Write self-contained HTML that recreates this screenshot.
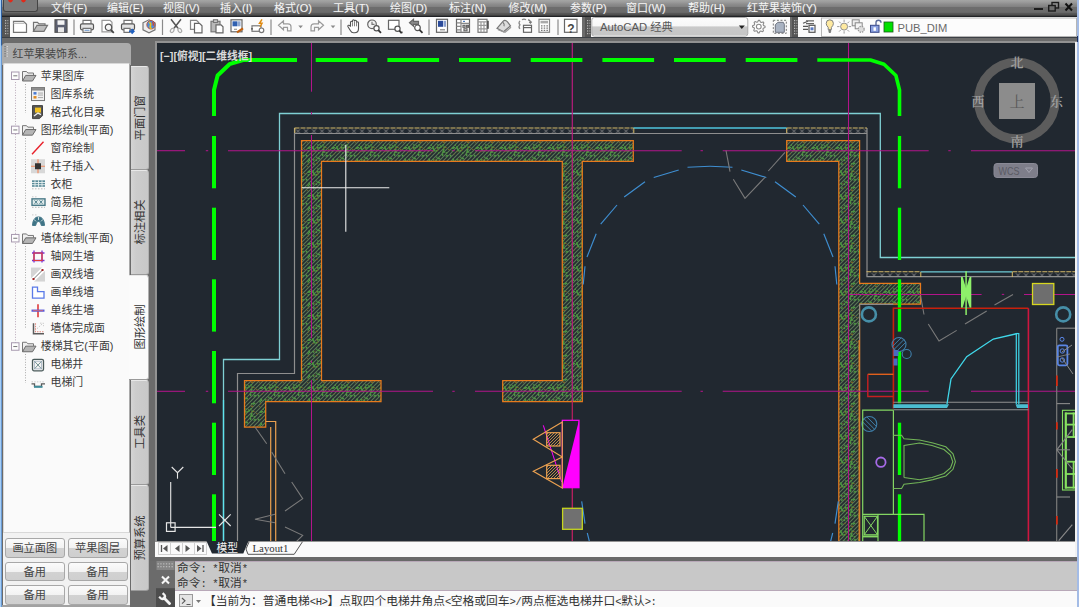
<!DOCTYPE html>
<html lang="zh">
<head>
<meta charset="utf-8">
<title>AutoCAD</title>
<style>
html,body{margin:0;padding:0;}
body{width:1079px;height:607px;overflow:hidden;position:relative;background:#6b6b6b;font-family:"Liberation Sans","Noto Sans CJK SC",sans-serif;font-size:12px;}
.abs{position:absolute;}
#menubar{left:0;top:0;width:1079px;height:17px;background:linear-gradient(#a5a6a5 0,#9c9c9c 2px,#8e8e8e 4px,#828282 6.5px,#6d6d6d 7.5px,#6b6b6b 12.3px,#595959 13.2px,#4b4b4b 15.3px,#222 16px,#20242a 17px);}
#menubar span{position:absolute;top:-0.5px;color:#f4f4f4;font-size:11px;line-height:16px;white-space:nowrap;text-shadow:0 0 1px #999;}
#logo{left:3px;top:0;width:35px;height:12px;background:#7a7a7a;border:1px solid #444;border-top:none;border-radius:0 0 3px 3px;box-sizing:border-box;}
.tb{top:17px;height:20px;background:#fafafa;}
.grip{top:17px;height:20px;width:6px;background:#555;}
#drawwrap{left:154.5px;top:41px;width:922px;height:501px;background:#929292;}
#draw{left:157px;top:43px;width:918px;height:498px;background:#212830;overflow:hidden;}
#tabs{left:155px;top:541.5px;width:921.5px;height:15px;background:#fafafa;}
#cmdhist{left:175px;top:560.6px;width:902px;height:30.6px;background:#c8c8c8;border-top:1px solid #b8a8b8;border-bottom:1px solid #b8a8b8;box-sizing:border-box;}
#cmdline{left:175px;top:591px;width:902px;height:16px;background:#fafafa;}
#cmdleft{left:155px;top:560px;width:20px;height:47px;background:#6b6b6b;}
.cmdtxt{font-family:"Liberation Mono","Noto Sans CJK SC",monospace;font-size:11.75px;color:#333;white-space:nowrap;line-height:13px;}
#panel{left:3px;top:43px;width:128px;height:564px;}
</style>
</head>
<body>
<!-- window edges -->
<div class="abs" style="left:0;top:0;width:1.3px;height:607px;background:#a6cef6;z-index:50;"></div>
<div class="abs" style="left:1.3px;top:0;width:1px;height:607px;background:linear-gradient(#2f5f9f 0,#2f5f9f 45px,#6a9ad2 46px,#6a9ad2 100%);z-index:50;"></div>
<div class="abs" style="left:1077.2px;top:0;width:2px;height:607px;background:#a4bce6;z-index:50;"></div>
<div class="abs" style="left:1076.6px;top:36px;width:1.6px;height:6px;background:#1c3264;z-index:51;"></div>
<div class="abs" style="left:1074.7px;top:42px;width:2.5px;height:515px;background:#f2f2f2;z-index:40;"></div>

<div id="menubar" class="abs">
<div id="logo" class="abs"></div>
<svg class="abs" style="left:0;top:0" width="1079" height="16" viewBox="0 0 1079 16">
<path d="M8,0 h5 q-0.5,2.2 -2.5,2.4 q-2,-0.3 -2.5,-2.4 z M21,0 h5 q-0.6,2.2 -2.6,2.4 q-1.9,-0.3 -2.4,-2.4 z" fill="#e02a1a"/>
<path d="M1034,9 h9" stroke="#1c1c1c" stroke-width="2"/>
<rect x="1052" y="2.5" width="6.5" height="5.5" fill="none" stroke="#1c1c1c" stroke-width="1.4"/>
<rect x="1048.7" y="5.5" width="6.5" height="5.5" fill="#6e6e6e" stroke="#1c1c1c" stroke-width="1.4"/>
<path d="M1065.5,3.5 l6.5,7 M1072,3.5 l-6.5,7" stroke="#111" stroke-width="2"/>
</svg>
<span style="left:51px">文件(F)</span>
<span style="left:107px">编辑(E)</span>
<span style="left:163px">视图(V)</span>
<span style="left:220px">插入(I)</span>
<span style="left:274px">格式(O)</span>
<span style="left:333px">工具(T)</span>
<span style="left:390px">绘图(D)</span>
<span style="left:449px">标注(N)</span>
<span style="left:508.5px">修改(M)</span>
<span style="left:570px">参数(P)</span>
<span style="left:626px">窗口(W)</span>
<span style="left:688px">帮助(H)</span>
<span style="left:747px">红苹果装饰(Y)</span>
</div>

<!-- toolbars -->
<div class="abs" style="left:2.3px;top:36.8px;width:1075px;height:1.4px;background:#3c4045;"></div>
<div class="abs grip" style="left:2.3px;width:8px"></div>
<div class="abs tb" style="left:10px;width:572px"></div>
<div class="abs grip" style="left:585px"></div>
<div class="abs tb" style="left:591px;width:199px"></div>
<div class="abs grip" style="left:792px"></div>
<div class="abs tb" style="left:798px;width:279px"></div>

<svg class="abs" style="left:0;top:16px" width="1079" height="22" viewBox="0 16 1079 22" font-family="Liberation Sans, Noto Sans CJK SC, sans-serif">
<rect x="5" y="20.0" width="1.2" height="1.2" fill="#bbb"/><rect x="7.2" y="20.0" width="1.2" height="1.2" fill="#999"/>
<rect x="5" y="22.6" width="1.2" height="1.2" fill="#bbb"/><rect x="7.2" y="22.6" width="1.2" height="1.2" fill="#999"/>
<rect x="5" y="25.2" width="1.2" height="1.2" fill="#bbb"/><rect x="7.2" y="25.2" width="1.2" height="1.2" fill="#999"/>
<rect x="5" y="27.8" width="1.2" height="1.2" fill="#bbb"/><rect x="7.2" y="27.8" width="1.2" height="1.2" fill="#999"/>
<rect x="5" y="30.4" width="1.2" height="1.2" fill="#bbb"/><rect x="7.2" y="30.4" width="1.2" height="1.2" fill="#999"/>
<rect x="5" y="33.0" width="1.2" height="1.2" fill="#bbb"/><rect x="7.2" y="33.0" width="1.2" height="1.2" fill="#999"/>
<rect x="587" y="20.0" width="1.2" height="1.2" fill="#bbb"/><rect x="589.2" y="20.0" width="1.2" height="1.2" fill="#999"/>
<rect x="587" y="22.6" width="1.2" height="1.2" fill="#bbb"/><rect x="589.2" y="22.6" width="1.2" height="1.2" fill="#999"/>
<rect x="587" y="25.2" width="1.2" height="1.2" fill="#bbb"/><rect x="589.2" y="25.2" width="1.2" height="1.2" fill="#999"/>
<rect x="587" y="27.8" width="1.2" height="1.2" fill="#bbb"/><rect x="589.2" y="27.8" width="1.2" height="1.2" fill="#999"/>
<rect x="587" y="30.4" width="1.2" height="1.2" fill="#bbb"/><rect x="589.2" y="30.4" width="1.2" height="1.2" fill="#999"/>
<rect x="587" y="33.0" width="1.2" height="1.2" fill="#bbb"/><rect x="589.2" y="33.0" width="1.2" height="1.2" fill="#999"/>
<rect x="794" y="20.0" width="1.2" height="1.2" fill="#bbb"/><rect x="796.2" y="20.0" width="1.2" height="1.2" fill="#999"/>
<rect x="794" y="22.6" width="1.2" height="1.2" fill="#bbb"/><rect x="796.2" y="22.6" width="1.2" height="1.2" fill="#999"/>
<rect x="794" y="25.2" width="1.2" height="1.2" fill="#bbb"/><rect x="796.2" y="25.2" width="1.2" height="1.2" fill="#999"/>
<rect x="794" y="27.8" width="1.2" height="1.2" fill="#bbb"/><rect x="796.2" y="27.8" width="1.2" height="1.2" fill="#999"/>
<rect x="794" y="30.4" width="1.2" height="1.2" fill="#bbb"/><rect x="796.2" y="30.4" width="1.2" height="1.2" fill="#999"/>
<rect x="794" y="33.0" width="1.2" height="1.2" fill="#bbb"/><rect x="796.2" y="33.0" width="1.2" height="1.2" fill="#999"/>
<line x1="74" y1="19.5" x2="74" y2="35" stroke="#8a8a8a" stroke-width="1.2"/>
<line x1="162.5" y1="19.5" x2="162.5" y2="35" stroke="#8a8a8a" stroke-width="1.2"/>
<line x1="271" y1="19.5" x2="271" y2="35" stroke="#8a8a8a" stroke-width="1.2"/>
<line x1="341" y1="19.5" x2="341" y2="35" stroke="#8a8a8a" stroke-width="1.2"/>
<line x1="429" y1="19.5" x2="429" y2="35" stroke="#8a8a8a" stroke-width="1.2"/>
<line x1="558" y1="19.5" x2="558" y2="35" stroke="#8a8a8a" stroke-width="1.2"/>
<g transform="translate(12,17.8)" fill="none" stroke="#747474" stroke-width="1.2"><path d="M1.5,3.5 h10 l3,3 v8 h-13 z" fill="#fff"/><path d="M1.5,5.5 h11" stroke="#bbb"/></g>
<g transform="translate(32,17.8)" fill="none" stroke="#747474" stroke-width="1.2"><path d="M1.5,13.5 v-9 h4 l1.5,1.5 h6 v2" fill="#eee"/><path d="M1.5,13.5 l3.5,-6 h10.5 l-3.5,6 z" fill="#bdbdbd"/></g>
<g transform="translate(53,17.8)" fill="none" stroke="#747474" stroke-width="1.2"><rect x="2" y="2" width="12" height="12.5" fill="#5c6070" stroke="#555"/><rect x="4.5" y="2.5" width="7" height="4.5" fill="#f4f4f4" stroke="none"/><rect x="5" y="9.5" width="6" height="5" fill="#e8e8e8" stroke="none"/></g>
<g transform="translate(79,17.8)" fill="none" stroke="#747474" stroke-width="1.2"><path d="M4,6 v-3.5 h8 v3.5" fill="#fff"/><rect x="1.5" y="6" width="13" height="6" rx="1.5" fill="#e4e4e4" stroke="#555"/><path d="M4,10.5 h8 v4 h-8 z" fill="#fff"/><path d="M5.5,12.5 h5" stroke="#7aa0d0"/></g>
<g transform="translate(99.5,17.8)" fill="none" stroke="#747474" stroke-width="1.2"><path d="M2.5,2.5 h8 l2,2 v9.5 h-10 z" fill="#fff" stroke="#999"/><circle cx="9" cy="9.5" r="3.2" fill="#f6f6f6" stroke="#555"/><path d="M11.3,12 l3,3" stroke="#444" stroke-width="1.8"/></g>
<g transform="translate(120,17.8)" fill="none" stroke="#747474" stroke-width="1.2"><path d="M4,6 v-3.5 h8 v3.5" fill="#fff"/><rect x="1.5" y="6" width="13" height="6" rx="1.5" fill="#e4e4e4" stroke="#555"/><path d="M4,10.5 h6 v4 h-6 z" fill="#fff"/><path d="M9,13.5 h4.5 m-2,-2.2 l2.2,2.2 l-2.2,2.2" stroke="#2060c0" stroke-width="1.8"/></g>
<g transform="translate(141,17.8)" fill="none" stroke="#747474" stroke-width="1.2"><path d="M2,5 l6,-3 l6,3 v7 l-6,3 l-6,-3 z" fill="#eee" stroke="#777"/><circle cx="10" cy="7" r="4.2" fill="#4a90e0" stroke="#c04020" stroke-width="0.8"/><path d="M8,4.5 q2.5,1 1.5,3 q-1,2 1,3.5" stroke="#e8c020" stroke-width="1.6"/><path d="M11.5,4 q1.5,2 0.5,4" stroke="#e04020" stroke-width="1.2"/></g>
<g transform="translate(168,17.8)" fill="none" stroke="#747474" stroke-width="1.2"><path d="M3,1.5 l7,9 M13,1.5 l-7,9" stroke="#555" stroke-width="1.5"/><ellipse cx="4.2" cy="12.6" rx="1.6" ry="2.2" stroke="#aaa" transform="rotate(35 4.2 12.6)"/><ellipse cx="11.8" cy="12.6" rx="1.6" ry="2.2" stroke="#aaa" transform="rotate(-35 11.8 12.6)"/></g>
<g transform="translate(188,17.8)" fill="none" stroke="#747474" stroke-width="1.2"><path d="M2.5,2.5 h6 l2,2 v7 h-8 z" fill="#fff" stroke="#888"/><path d="M6.5,5.5 h5 l2.5,2.5 v7 h-7.5 z" fill="#fff" stroke="#666"/></g>
<g transform="translate(209,17.8)" fill="none" stroke="#747474" stroke-width="1.2"><rect x="2" y="3.5" width="9" height="10.5" fill="#b8b8b8" stroke="#777"/><rect x="4.5" y="2" width="4" height="2.6" fill="#ddd" stroke="#777"/><path d="M7,7 h5 l2,2 v6 h-7 z" fill="#fff" stroke="#666"/></g>
<g transform="translate(229,17.8)" fill="none" stroke="#747474" stroke-width="1.2"><rect x="2" y="2" width="11" height="12" fill="#fff" stroke="#666"/><rect x="3.5" y="3.5" width="5" height="5" fill="#3060b0" stroke="none"/><rect x="9" y="3.5" width="2.5" height="5" fill="#90a8d0" stroke="none"/><path d="M8,14.5 l6,-4" stroke="#c06010" stroke-width="2.2"/><path d="M5,11.5 h3" stroke="#999"/></g>
<g transform="translate(250,17.8)" fill="none" stroke="#747474" stroke-width="1.2"><rect x="2" y="8" width="9" height="5.5" fill="#fff" stroke="#777"/><circle cx="11.5" cy="12.5" r="2.3" fill="#fff" stroke="#777"/><path d="M12,1.5 l-2.5,4 h2.5 l-2,3.5" stroke="#e08a10" stroke-width="1.5"/><path d="M1,11 h2" stroke="#555"/></g>
<g transform="translate(277,17.8)" fill="none" stroke="#747474" stroke-width="1.2"><path d="M1.5,7.5 l5,-4.5 v3 h4.5 q3,0 3,3 v4 h-3.5 v-3.5 h-4 v2.5 z" fill="#fafafa" stroke="#9a9a9a"/></g>
<path d="M298.3,25.6 h4.6 l-2.3,2.6 z" fill="#8a8a8a"/>
<g transform="translate(309,17.8)" fill="none" stroke="#747474" stroke-width="1.2"><path d="M14.5,7.5 l-5,-4.5 v3 h-4.5 q-3,0 -3,3 v4 h3.5 v-3.5 h4 v2.5 z" fill="#fafafa" stroke="#9a9a9a"/></g>
<path d="M330.7,25.6 h4.6 l-2.3,2.6 z" fill="#8a8a8a"/>
<g transform="translate(346,17.8)" fill="none" stroke="#747474" stroke-width="1.2"><path d="M4.5,9 v-4.5 q0,-1 1,-1 t1,1 v-1.5 q0,-1 1,-1 t1,1 v0.5 q0,-1 1,-1 t1,1 v1.5 q0,-1 1,-1 t1,1 v6 q0,4 -4,4 h-1 q-2,0 -3,-2 l-2.5,-4 q-0.5,-1.2 0.5,-1.5 t2,1 z" fill="#fff" stroke="#555" stroke-width="1.1"/><path d="M6.5,4.5 v4 M8.5,3.5 v5 M10.5,4 v4.5" stroke="#777" stroke-width="0.9"/></g>
<g transform="translate(366,17.8)" fill="none" stroke="#747474" stroke-width="1.2"><circle cx="6" cy="6.5" r="4.3" fill="#f4f4f4" stroke="#666"/><path d="M6,4 v2.5 h2.5" stroke="#777"/><circle cx="10.5" cy="10.5" r="2.6" fill="#fff" stroke="#555"/><path d="M12.3,12.3 l2.7,2.7" stroke="#333" stroke-width="1.8"/></g>
<g transform="translate(387,17.8)" fill="none" stroke="#747474" stroke-width="1.2"><rect x="1.5" y="2.5" width="10.5" height="9" fill="#fff" stroke="#666"/><circle cx="10.5" cy="11" r="2.6" fill="#fff" stroke="#555"/><path d="M12.3,12.8 l2.4,2.4" stroke="#333" stroke-width="1.8"/><path d="M13.5,15.5 h2 v-2 z" fill="#333" stroke="none"/></g>
<g transform="translate(408,17.8)" fill="none" stroke="#747474" stroke-width="1.2"><path d="M1.5,5 l4,-3.5 v2 h5 v3 h-5 v2 z" fill="#8a8a8a" stroke="#666"/><circle cx="9.5" cy="10" r="2.8" fill="#fff" stroke="#555"/><path d="M11.5,12 l3,3" stroke="#333" stroke-width="1.8"/></g>
<g transform="translate(434,17.8)" fill="none" stroke="#747474" stroke-width="1.2"><rect x="2.5" y="1.5" width="11" height="13" fill="#fff" stroke="#666"/><rect x="4" y="3" width="5" height="6" fill="#2a4a9a" stroke="none"/><rect x="9.5" y="3" width="2.5" height="6" fill="#8aa0d0" stroke="none"/><path d="M6,12 h5" stroke="#888"/></g>
<g transform="translate(455,17.8)" fill="none" stroke="#747474" stroke-width="1.2"><rect x="1.5" y="1.5" width="13" height="13" fill="#fff" stroke="#666"/><path d="M6,1.5 v13 M6,5.5 h8.5 M1.5,5 h4.5 M1.5,8.5 h4.5 M1.5,12 h4.5" stroke="#888"/><rect x="8" y="7.5" width="2" height="2" stroke="#666"/><rect x="11.5" y="7.5" width="2" height="2" stroke="#666"/><rect x="9" y="11" width="3" height="2" stroke="#666"/><rect x="8" y="3" width="2" height="1.2" fill="#5080c0" stroke="none"/></g>
<g transform="translate(475,17.8)" fill="none" stroke="#747474" stroke-width="1.2"><rect x="3" y="1.5" width="9" height="13" fill="#fff" stroke="#777"/><path d="M3,4 h9 M6,4 v10.5 M9,4 v10.5 M3,7.5 h9 M3,11 h9" stroke="#999"/><rect x="12" y="3" width="1.8" height="8" fill="#555" stroke="none"/></g>
<g transform="translate(496,17.8)" fill="none" stroke="#747474" stroke-width="1.2"><path d="M1,10.5 l6,-7 q2,-2 4.5,0.5 l3,4 l-7,6 z" fill="#ddd" stroke="#777"/><path d="M2,12 l7,2.5 l6,-5" stroke="#999"/><path d="M7,4.5 q2,2 1,4" stroke="#777"/></g>
<g transform="translate(517,17.8)" fill="none" stroke="#747474" stroke-width="1.2"><path d="M3,3 q-2,2 0,4 q-2,2 0,4 M5,2 q2,-1.5 4,0" stroke="#888"/><rect x="6.5" y="7.5" width="8" height="7" fill="#fff" stroke="#666"/><path d="M6.5,9.8 h8" stroke="#666"/><path d="M11,2 q2.5,0 2.5,3 m-1.3,-1 l1.3,1.4 l1.2,-1.5" stroke="#777"/></g>
<g transform="translate(536,17.8)" fill="none" stroke="#747474" stroke-width="1.2"><rect x="3" y="1.5" width="10.5" height="13" fill="#fff" stroke="#888"/><rect x="4.5" y="3" width="7.5" height="2.6" fill="#aaa" stroke="none"/><path d="M5,8 h1.5 M7.7,8 h1.5 M10.4,8 h1.5 M5,10.3 h1.5 M7.7,10.3 h1.5 M10.4,10.3 h1.5 M5,12.6 h1.5 M7.7,12.6 h1.5 M10.4,12.6 h1.5" stroke="#777" stroke-width="1.3"/></g>
<g transform="translate(563,17.8)" fill="none" stroke="#747474" stroke-width="1.2"><rect x="1.5" y="1.5" width="12.5" height="13" fill="#fff" stroke="#666"/></g>
<text x="571" y="32.5" font-size="12" font-weight="bold" fill="#444" text-anchor="middle">?</text>
<defs><linearGradient id="cbg" x1="0" y1="0" x2="0" y2="1"><stop offset="0" stop-color="#fcfcfc"/><stop offset="0.46" stop-color="#f7f7f7"/><stop offset="0.5" stop-color="#c9c9c9"/><stop offset="0.92" stop-color="#c6c6c6"/><stop offset="0.96" stop-color="#f4f4f4"/><stop offset="1" stop-color="#f4f4f4"/></linearGradient></defs>
<rect x="591.8" y="17.5" width="156" height="18.6" rx="2.5" fill="url(#cbg)" stroke="#a6a6a6" stroke-width="0.9"/>
<text x="600" y="31" font-size="11.3" fill="#585858">AutoCAD 经典</text>
<path d="M738.8,25.6 h6 l-3,3.4 z" fill="#222"/>
<g transform="translate(750.8,17.8)" fill="none" stroke="#747474" stroke-width="1.2"><polygon points="14.29,8.49 14.23,9.72 12.52,10.42 12.12,11.27 12.67,13.03 11.75,13.86 10.05,13.14 9.17,13.46 8.31,15.09 7.08,15.03 6.38,13.32 5.53,12.92 3.77,13.47 2.94,12.55 3.66,10.85 3.34,9.97 1.71,9.11 1.77,7.88 3.48,7.18 3.88,6.33 3.33,4.57 4.25,3.74 5.95,4.46 6.83,4.14 7.69,2.51 8.92,2.57 9.62,4.28 10.47,4.68 12.23,4.13 13.06,5.05 12.34,6.75 12.66,7.63" fill="#fdfdfd" stroke="#8a8a8a" stroke-width="1.1" stroke-linejoin="round"/><circle cx="8" cy="8.8" r="2.4" fill="#fff" stroke="#8a8a8a" stroke-width="1.1"/></g>
<g transform="translate(771.8,17.8)" fill="none" stroke="#747474" stroke-width="1.2"><rect x="1.5" y="2.5" width="13" height="13" stroke="#777" stroke-width="1" stroke-dasharray="2 1.6"/><path d="M3.5,14.5 v-7.5 l2.5,-2.5 h5.5 l1,2 v8 z" fill="#a9b3c2" stroke="#6e7480" stroke-width="1"/></g>
<g transform="translate(801,17.8)" fill="none" stroke="#747474" stroke-width="1.2"><path d="M2,5.5 l5,-2 M2,8.5 h5 M2,11.5 h5" stroke="#555"/><path d="M5,3 h8 M5,5.8 h8" stroke="#666"/><rect x="8" y="7.5" width="6" height="7" fill="#fff" stroke="#555"/><rect x="9.5" y="9.5" width="3" height="3" fill="#5a7ac0" stroke="none"/></g>
<rect x="821.5" y="18" width="255" height="18.5" fill="#fcfcfc" stroke="#b5b5b5" stroke-width="1"/>
<g transform="translate(821.8,18.3)" fill="none"><path d="M8,1.5 q-3.6,0 -3.6,3.6 q0,2 2,4 v2.2 h3.2 v-2.2 q2,-2 2,-4 q0,-3.6 -3.6,-3.6 z" fill="#ffeaa0" stroke="#808080" stroke-width="1"/><path d="M6.6,12.6 h2.8 M7,14 h2" stroke="#555" stroke-width="1.1"/></g>
<g transform="translate(836.1,18.6)" fill="none"><circle cx="8" cy="8" r="3.5" fill="#ffeaa0" stroke="#909090" stroke-width="1"/><path d="M8,1 v2.4 M8,12.6 v2.4 M1,8 h2.4 M12.6,8 h2.4 M3,3 l1.7,1.7 M11.3,11.3 l1.7,1.7 M13,3 l-1.7,1.7 M4.7,11.3 l-1.7,1.7" stroke="#9a9a9a" stroke-width="1"/></g>
<g transform="translate(850.7,18.3)" fill="none"><rect x="1.5" y="1.5" width="7" height="6" fill="#eee" stroke="#888" stroke-width="1"/><rect x="4.5" y="4.5" width="7" height="6" fill="#f4f4f4" stroke="#888" stroke-width="1"/><circle cx="10.5" cy="11" r="3" fill="#ddd" stroke="#999" stroke-width="1.2" stroke-dasharray="1.4 1"/></g>
<g transform="translate(867.5,18.3)" fill="none"><path d="M8.5,7 v-2.5 q0,-2.5 2.5,-2.5 q2.5,0 2.5,2.5" stroke="#5a6a9a" stroke-width="1.4"/><rect x="3" y="7" width="8.5" height="7" fill="#8aa0e0" stroke="#3a4a8a" stroke-width="1"/><rect x="6" y="9" width="2.4" height="3.5" fill="#fff" stroke="none"/></g>
<rect x="884" y="22" width="9" height="10" fill="#00e000" stroke="#1a5a1a" stroke-width="0.8"/>
<text x="897.5" y="31.5" font-size="11.2" fill="#6a6a6a">PUB_DIM</text>
</svg>
<!-- drawing area -->
<div id="drawwrap" class="abs"></div>
<div id="draw" class="abs">
<svg id="cad" class="abs" style="left:-157px;top:-43px" width="1079" height="607" viewBox="0 0 1079 607">
<defs>
<pattern id="hatch" width="24" height="24" patternUnits="userSpaceOnUse">
<rect width="24" height="24" fill="#232d2f"/>
<path d="M1,-1 L-25,25 M5,-1 L-21,25 M9,-1 L-17,25 M13,-1 L-13,25 M17,-1 L-9,25 M21,-1 L-5,25 M25,-1 L-1,25 M29,-1 L3,25 M33,-1 L7,25 M37,-1 L11,25 M41,-1 L15,25 M45,-1 L19,25 M49,-1 L23,25" stroke="#5b7657" stroke-width="1.1" fill="none"/>
<path d="M7.9,4.0 l-0.6,-0.9 M8.9,1.8 l-1.0,-0.0 M2.1,2.6 l-1.8,0.9 l-0.6,-1.2 M5.6,14.9 l1.6,-0.6 l0.4,1.1 M23.0,1.6 l0.8,-1.0 l0.7,0.6 M3.2,7.6 l0.5,-1.1 M15.2,9.1 l-1.0,-0.3 l0.2,-0.7 M5.2,16.1 l-1.2,0.6 M10.9,7.4 l0.5,-1.8 l1.2,0.4 M13.7,12.6 l1.3,-1.3 l0.9,0.9 M23.0,3.2 l-1.7,0.9 l-0.7,-1.2 M11.7,1.4 l-0.9,-1.7 M20.6,7.7 l-0.6,-1.6 M11.0,19.8 l1.5,-0.5 M1.9,16.6 l-1.3,-1.7 M7.0,9.4 l-0.5,-0.9 M4.4,3.2 l1.8,0.7 l-0.5,1.3 M6.2,9.5 l0.8,-0.8 M13.1,20.8 l0.9,-1.8 l1.3,0.6 M10.1,8.8 l1.6,-1.4 l1.0,1.1 M4.6,5.8 l0.2,1.6 M6.5,0.6 l-1.3,0.7 M22.4,16.4 l-1.7,-0.2 M1.7,21.2 l0.4,-2.0 M9.5,9.7 l1.4,1.1 l-0.7,1.0 M2.0,5.3 l0.7,1.2 l-0.8,0.5 M0.5,4.0 l1.2,0.9 l-0.6,0.8 M20.6,14.6 l0.8,1.0 l-0.7,0.5 M8.9,3.3 l1.3,-1.8 M11.6,2.5 l1.1,0.8 l-0.6,0.8 M19.6,4.2 l2.1,0.3 M3.9,13.0 l1.6,0.3 M20.4,16.5 l-0.1,1.4 l-1.0,-0.1 M18.3,12.7 l0.2,-1.4 l1.0,0.2" stroke="#4c983f" stroke-width="1.25" fill="none"/>
<path d="M19.2,23.2 l0.8,-1.1 M17.5,5.7 l-1.0,-0.1 l0.1,-0.7 M1.1,6.9 l-0.1,1.3 M10.8,22.1 l1.5,-0.1 l0.1,1.0 M5.6,5.7 l0.3,0.9 M21.2,19.8 l-1.2,0.2 M2.4,15.7 l1.1,-0.7 M11.5,4.6 l0.2,-1.0 M22.8,9.6 l-1.2,0.9 M4.4,3.4 l0.8,1.2 M3.9,19.5 l1.2,-0.2 l0.1,0.9 M13.1,3.5 l1.5,0.1 M12.6,22.0 l-1.3,0.6 M5.4,6.3 l-0.3,0.9" stroke="#7c6626" stroke-width="1" fill="none"/>
</pattern>
<pattern id="insul" width="8" height="6" patternUnits="userSpaceOnUse" x="294.5" y="128">
<path d="M1.6,1.3 L5.4,5.2 M5.4,1.3 L1.6,5.2" stroke="#969696" stroke-width="0.8" fill="none"/>
</pattern>
<pattern id="ohatch" width="3" height="3" patternUnits="userSpaceOnUse">
<path d="M-1,1 L1,-1 M0,3 L3,0 M2,4 L4,2" stroke="#e0a050" stroke-width="0.8"/>
</pattern>
</defs>
<polyline points="1076,257.5 880.3,257.5 880.3,113.5 279.5,113.5 279.5,359.5 223.5,359.5 223.5,542" stroke="#7fd0d4" stroke-width="1.3" fill="none" />
<line x1="223.5" y1="400" x2="223.5" y2="542" stroke="#5fe4ee" stroke-width="1.3" />
<polyline points="294.5,128 294.5,373.5 237.5,373.5 237.5,542" stroke="#8e8e8e" stroke-width="1.2" fill="none" />
<line x1="294.5" y1="133.5" x2="867" y2="133.5" stroke="#8e8e8e" stroke-width="1.2" />
<polyline points="867,128 867,276.7 1076,276.7" stroke="#8e8e8e" stroke-width="1.2" fill="none" />
<rect x="294.5" y="128" width="338.79999999999995" height="5.5" fill="url(#insul)"/>
<line x1="294.5" y1="128" x2="633.3" y2="128" stroke="#d6ba6a" stroke-width="1.1" stroke-dasharray="5 1"/>
<rect x="786.7" y="128" width="80.29999999999995" height="5.5" fill="url(#insul)"/>
<line x1="786.7" y1="128" x2="867" y2="128" stroke="#d6ba6a" stroke-width="1.1" stroke-dasharray="5 1"/>
<line x1="633.3" y1="128" x2="786.7" y2="128" stroke="#4fc4de" stroke-width="1.3" />
<line x1="633.8" y1="128" x2="633.8" y2="133" stroke="#d9bb66" stroke-width="1" />
<line x1="786.7" y1="128" x2="786.7" y2="133" stroke="#d9bb66" stroke-width="1" />
<line x1="294.8" y1="128" x2="294.8" y2="133" stroke="#d9bb66" stroke-width="1" />
<rect x="866.5" y="271.8" width="54.0" height="5.5" fill="url(#insul)"/>
<line x1="866.5" y1="271.8" x2="920.5" y2="271.8" stroke="#d6ba6a" stroke-width="1.1" stroke-dasharray="5 1"/>
<rect x="1012.3" y="271.8" width="63.700000000000045" height="5.5" fill="url(#insul)"/>
<line x1="1012.3" y1="271.8" x2="1076" y2="271.8" stroke="#d6ba6a" stroke-width="1.1" stroke-dasharray="5 1"/>
<line x1="920.5" y1="271.8" x2="1012.3" y2="271.8" stroke="#6ecbd6" stroke-width="1.3" />
<line x1="920.8" y1="272" x2="920.8" y2="277" stroke="#d9bb66" stroke-width="1" />
<line x1="1012.3" y1="272" x2="1012.3" y2="277" stroke="#d9bb66" stroke-width="1" />
<polygon points="301.5,140.5 633.3,140.5 633.3,161.3 582.3,161.3 582.3,401.5 502.7,401.5 502.7,380.5 562.3,380.5 562.3,161.3 321.5,161.3 321.5,380.5 381,380.5 381,401.5 265.7,401.5 265.7,427 244.5,427 244.5,380.5 301.5,380.5" stroke="#e87a1c" stroke-width="1.25" fill="url(#hatch)" />
<polygon points="786.7,140.5 859.6,140.5 859.6,283.3 920.5,283.3 920.5,304.2 859.6,304.2 859.6,545 838.8,545 838.8,161.3 786.7,161.3" stroke="#e87a1c" stroke-width="1.25" fill="url(#hatch)" />
<line x1="859.6" y1="304.4" x2="893.4" y2="304.4" stroke="#8a8a8a" stroke-width="1.3" />
<line x1="859.6" y1="304.4" x2="859.6" y2="542" stroke="#8a8a8a" stroke-width="1" />
<line x1="859.2" y1="340" x2="859.2" y2="542" stroke="#e87a1c" stroke-width="1.2" />
<polyline points="265.7,421.5 275.7,421.5 275.7,542" stroke="#eaa050" stroke-width="1.2" fill="none" />
<line x1="270.7" y1="427" x2="270.7" y2="542" stroke="#eaa050" stroke-width="1.2" />
<line x1="157" y1="150.7" x2="185" y2="150.7" stroke="#b2148a" stroke-width="1.05" />
<line x1="228" y1="150.7" x2="433" y2="150.7" stroke="#b2148a" stroke-width="1.05" />
<line x1="475" y1="150.7" x2="681.7" y2="150.7" stroke="#b2148a" stroke-width="1.05" />
<line x1="722.7" y1="150.7" x2="928.7" y2="150.7" stroke="#b2148a" stroke-width="1.05" />
<line x1="971" y1="150.7" x2="1076" y2="150.7" stroke="#b2148a" stroke-width="1.05" />
<line x1="205.8" y1="150.7" x2="208.2" y2="150.7" stroke="#b2148a" stroke-width="1.05" />
<line x1="452.3" y1="150.7" x2="454.7" y2="150.7" stroke="#b2148a" stroke-width="1.05" />
<line x1="700.5" y1="150.7" x2="702.9000000000001" y2="150.7" stroke="#b2148a" stroke-width="1.05" />
<line x1="948.3" y1="150.7" x2="950.7" y2="150.7" stroke="#b2148a" stroke-width="1.05" />
<line x1="157" y1="391.3" x2="185" y2="391.3" stroke="#b2148a" stroke-width="1.05" />
<line x1="228" y1="391.3" x2="433" y2="391.3" stroke="#b2148a" stroke-width="1.05" />
<line x1="475" y1="391.3" x2="681.7" y2="391.3" stroke="#b2148a" stroke-width="1.05" />
<line x1="722.7" y1="391.3" x2="928.7" y2="391.3" stroke="#b2148a" stroke-width="1.05" />
<line x1="971" y1="391.3" x2="1076" y2="391.3" stroke="#b2148a" stroke-width="1.05" />
<line x1="205.8" y1="391.3" x2="208.2" y2="391.3" stroke="#b2148a" stroke-width="1.05" />
<line x1="452.3" y1="391.3" x2="454.7" y2="391.3" stroke="#b2148a" stroke-width="1.05" />
<line x1="700.5" y1="391.3" x2="702.9000000000001" y2="391.3" stroke="#b2148a" stroke-width="1.05" />
<line x1="848.4" y1="294.4" x2="981.6" y2="294.4" stroke="#b2148a" stroke-width="1.05" />
<line x1="1024" y1="294.4" x2="1076" y2="294.4" stroke="#b2148a" stroke-width="1.05" />
<line x1="1001.8" y1="294.4" x2="1004.2" y2="294.4" stroke="#b2148a" stroke-width="1.05" />
<line x1="311.5" y1="43" x2="311.5" y2="91.7" stroke="#b2148a" stroke-width="1.05" />
<line x1="311.5" y1="112" x2="311.5" y2="114.4" stroke="#b2148a" stroke-width="1.05" />
<line x1="311.5" y1="135" x2="311.5" y2="338.3" stroke="#b2148a" stroke-width="1.05" />
<line x1="311.5" y1="360.5" x2="311.5" y2="362.9" stroke="#b2148a" stroke-width="1.05" />
<line x1="311.5" y1="380" x2="311.5" y2="542" stroke="#b2148a" stroke-width="1.05" />
<line x1="572.3" y1="43" x2="572.3" y2="401" stroke="#b81c7c" stroke-width="1.2" />
<line x1="572.3" y1="401" x2="572.3" y2="420" stroke="#bc2060" stroke-width="1.2" />
<line x1="572.3" y1="487" x2="572.3" y2="542" stroke="#bc2060" stroke-width="1.3" />
<line x1="848.5" y1="43" x2="848.5" y2="542" stroke="#b2148a" stroke-width="1.05" />
<line x1="687.5" y1="167.2" x2="710" y2="166.2" stroke="#3f8fd2" stroke-width="1.15" />
<line x1="732.5" y1="167.2" x2="710" y2="166.2" stroke="#3f8fd2" stroke-width="1.15" />
<line x1="678.7" y1="170" x2="653.7" y2="177.5" stroke="#3f8fd2" stroke-width="1.15" />
<line x1="741.3" y1="170" x2="766.3" y2="177.5" stroke="#3f8fd2" stroke-width="1.15" />
<line x1="645" y1="181.7" x2="624.2" y2="197" stroke="#3f8fd2" stroke-width="1.15" />
<line x1="775" y1="181.7" x2="795.8" y2="197" stroke="#3f8fd2" stroke-width="1.15" />
<line x1="617" y1="205" x2="600.7" y2="224.2" stroke="#3f8fd2" stroke-width="1.15" />
<line x1="803" y1="205" x2="819.3" y2="224.2" stroke="#3f8fd2" stroke-width="1.15" />
<line x1="596.2" y1="233.7" x2="587" y2="257" stroke="#3f8fd2" stroke-width="1.15" />
<line x1="823.8" y1="233.7" x2="833" y2="257" stroke="#3f8fd2" stroke-width="1.15" />
<line x1="585" y1="266.2" x2="583.2" y2="284.5" stroke="#3f8fd2" stroke-width="1.15" />
<line x1="835" y1="266.2" x2="836.8" y2="284.5" stroke="#3f8fd2" stroke-width="1.15" />
<line x1="581.7" y1="501.3" x2="585" y2="523.7" stroke="#3f8fd2" stroke-width="1.15" />
<line x1="838.3" y1="501.3" x2="835" y2="523.7" stroke="#3f8fd2" stroke-width="1.15" />
<line x1="587.3" y1="533" x2="589.5" y2="542" stroke="#3f8fd2" stroke-width="1.15" />
<line x1="832.7" y1="533" x2="830.5" y2="542" stroke="#3f8fd2" stroke-width="1.15" />
<polyline points="297,60 243,60 229.5,64.2 217.6,75.5 214,90 214,116" stroke="#00ff00" stroke-width="4" fill="none" stroke-linejoin="round"/>
<polyline points="817.3,60 870.5,60 884,64.2 895.9,75.5 899.5,90 899.5,116" stroke="#00ff00" stroke-width="3.6" fill="none" stroke-linejoin="round"/>
<line x1="315.7" y1="60" x2="367.4" y2="60" stroke="#00ff00" stroke-width="4" />
<line x1="387.4" y1="60" x2="439.1" y2="60" stroke="#00ff00" stroke-width="4" />
<line x1="459.0" y1="60" x2="510.7" y2="60" stroke="#00ff00" stroke-width="4" />
<line x1="530.7" y1="60" x2="582.4" y2="60" stroke="#00ff00" stroke-width="4" />
<line x1="602.4" y1="60" x2="654.1" y2="60" stroke="#00ff00" stroke-width="4" />
<line x1="674.0" y1="60" x2="725.7" y2="60" stroke="#00ff00" stroke-width="4" />
<line x1="745.7" y1="60" x2="797.4" y2="60" stroke="#00ff00" stroke-width="4" />
<line x1="214" y1="136.0" x2="214" y2="188.3" stroke="#00ff00" stroke-width="4" />
<line x1="899.5" y1="136.0" x2="899.5" y2="188.3" stroke="#00ff00" stroke-width="3.3" />
<line x1="214" y1="207.7" x2="214" y2="260.0" stroke="#00ff00" stroke-width="4" />
<line x1="899.5" y1="207.7" x2="899.5" y2="260.0" stroke="#00ff00" stroke-width="3.3" />
<line x1="214" y1="279.3" x2="214" y2="331.6" stroke="#00ff00" stroke-width="4" />
<line x1="899.5" y1="279.3" x2="899.5" y2="331.6" stroke="#00ff00" stroke-width="3.3" />
<line x1="214" y1="351.0" x2="214" y2="403.3" stroke="#00ff00" stroke-width="4" />
<line x1="899.5" y1="351.0" x2="899.5" y2="403.3" stroke="#00ff00" stroke-width="3.3" />
<line x1="214" y1="422.7" x2="214" y2="475.0" stroke="#00ff00" stroke-width="4" />
<line x1="899.5" y1="422.7" x2="899.5" y2="475.0" stroke="#00ff00" stroke-width="3.3" />
<line x1="214" y1="494.3" x2="214" y2="543" stroke="#00ff00" stroke-width="4" />
<line x1="899.5" y1="494.3" x2="899.5" y2="543" stroke="#00ff00" stroke-width="3.3" />
<line x1="726" y1="150.5" x2="730" y2="171.7" stroke="#7a7a7a" stroke-width="1.1" />
<polyline points="733.3,179.3 745,198.3 765,177.3" stroke="#7a7a7a" stroke-width="1.1" fill="none" />
<line x1="768.3" y1="171" x2="785" y2="152.3" stroke="#7a7a7a" stroke-width="1.1" />
<line x1="255" y1="427" x2="266.7" y2="443.7" stroke="#7a7a7a" stroke-width="1.1" />
<line x1="271.7" y1="452" x2="285" y2="473.7" stroke="#7a7a7a" stroke-width="1.1" />
<polyline points="291.7,482 302.7,498.7 285,511" stroke="#7a7a7a" stroke-width="1.1" fill="none" />
<polyline points="275,514.3 255,519.3 275,522.7" stroke="#7a7a7a" stroke-width="1.1" fill="none" />
<polyline points="285,527 302.7,535.3 296,542" stroke="#7a7a7a" stroke-width="1.1" fill="none" />
<line x1="920.5" y1="295.6" x2="924" y2="314.5" stroke="#7a7a7a" stroke-width="1.1" />
<polyline points="928.3,324 939,341 956.7,330.4" stroke="#7a7a7a" stroke-width="1.1" fill="none" />
<line x1="965" y1="324" x2="986.7" y2="311" stroke="#7a7a7a" stroke-width="1.1" />
<line x1="994.5" y1="305" x2="1013" y2="294.4" stroke="#7a7a7a" stroke-width="1.1" />
<polygon points="579,420.3 579,487.7 562.3,487.7" fill="#ff00ff"/>
<rect x="562.3" y="420.3" width="16.7" height="67.4" fill="none" stroke="#ff00ff" stroke-width="1.2"/>
<line x1="543.3" y1="425.3" x2="561.7" y2="482" stroke="#ff00ff" stroke-width="1" />
<polygon points="562.3,422 533.3,439.3 562.3,457" stroke="#eaa050" stroke-width="1.2" fill="none" />
<polygon points="562.3,457 533.3,471.3 562.3,488" stroke="#eaa050" stroke-width="1.2" fill="none" />
<rect x="546.7" y="432.7" width="13.3" height="13.3" fill="url(#ohatch)" stroke="#eaa050" stroke-width="1.2"/>
<rect x="546.7" y="465.3" width="13.3" height="13.3" fill="url(#ohatch)" stroke="#eaa050" stroke-width="1.2"/>
<rect x="562.6" y="508.3" width="19.7" height="21" fill="#707070" stroke="#c6d51e" stroke-width="1.3"/>
<rect x="1032.5" y="283.5" width="21.3" height="21" fill="#6e6e6e" stroke="#d6d620" stroke-width="1.3"/>
<polyline points="893.4,408.5 893.4,308.3 1028.4,308.3" stroke="#c8200c" stroke-width="1.6" fill="none" />
<line x1="1028.4" y1="308.3" x2="1028.4" y2="542" stroke="#cf1640" stroke-width="1.6" />
<polyline points="893.4,374.3 867.8,374.3" stroke="#e0601c" stroke-width="1.4" fill="none" />
<polyline points="867.8,374.3 867.8,396.5 893.4,396.5" stroke="#c82020" stroke-width="1.4" fill="none" />
<line x1="893.4" y1="402.3" x2="1028.4" y2="402.3" stroke="#909090" stroke-width="1.1" />
<line x1="893.4" y1="409.8" x2="1028.4" y2="409.8" stroke="#909090" stroke-width="1.1" />
<polygon points="893.4,404.3 949,404.3 947,408 893.4,408" fill="#4bbdd0"/>
<polygon points="1015.5,404.3 1028,404.3 1028,408 1017,408" fill="#4bbdd0"/>
<polyline points="1016.3,404 1016.3,333.5 1018.8,333.5 1018.8,404" stroke="#40d8ea" stroke-width="1.2" fill="none" />
<polyline points="1017.5,333.5 993.3,339 966.7,356.7 951,379 947,404" stroke="#40d8ea" stroke-width="1.3" fill="none" />
<rect x="961" y="277" width="10.3" height="30.6" fill="#8ef06a"/>
<polygon points="962.7,277 969.6,277 966.1,288.5" fill="#212830"/>
<polygon points="962.7,307.6 969.6,307.6 966.1,296" fill="#212830"/>
<line x1="966.1" y1="271.3" x2="966.1" y2="315" stroke="#8ef06a" stroke-width="1.5" />
<circle cx="868.9" cy="314.4" r="7" fill="none" stroke="#468fa8" stroke-width="2.6"/>
<circle cx="1063.2" cy="314.4" r="7" fill="none" stroke="#468fa8" stroke-width="2.6"/>
<circle cx="899" cy="344.5" r="7" fill="none" stroke="#3f7faa" stroke-width="1.1"/>
<line x1="892.3" y1="346.6" x2="901.1" y2="337.8" stroke="#3f7faa" stroke-width="1" />
<line x1="894.1" y1="349.4" x2="903.9" y2="339.6" stroke="#3f7faa" stroke-width="1" />
<line x1="896.9" y1="351.2" x2="905.7" y2="342.4" stroke="#3f7faa" stroke-width="1" />
<circle cx="906.7" cy="354" r="4.5" fill="none" stroke="#3f7faa" stroke-width="1.1"/>
<rect x="893.5" y="350" width="5" height="6" fill="#4a6cc0"/>
<rect x="893.5" y="358.5" width="4" height="7" fill="#4a6cc0"/>
<circle cx="869.3" cy="424" r="7.5" fill="none" stroke="#3f7faa" stroke-width="1.1"/>
<line x1="862.2" y1="421.5" x2="871.8" y2="431.1" stroke="#3f7faa" stroke-width="1" />
<line x1="864.0" y1="418.7" x2="874.6" y2="429.3" stroke="#3f7faa" stroke-width="1" />
<line x1="866.8" y1="416.9" x2="876.4" y2="426.5" stroke="#3f7faa" stroke-width="1" />
<line x1="1056.7" y1="328.2" x2="1076" y2="328.2" stroke="#8a8a8a" stroke-width="1.1" />
<line x1="1056.7" y1="328.2" x2="1056.7" y2="542" stroke="#7a7a7a" stroke-width="1.2" />
<circle cx="1062" cy="339.3" r="2" fill="none" stroke="#5a86e6" stroke-width="1"/>
<rect x="1057.8" y="345.3" width="9.6" height="20" rx="1.5" fill="none" stroke="#5a86e6" stroke-width="1.8"/>
<circle cx="1062.3" cy="351" r="2.2" fill="none" stroke="#5a86e6" stroke-width="1"/>
<circle cx="1062.3" cy="360" r="2.2" fill="none" stroke="#5a86e6" stroke-width="1"/>
<line x1="1062" y1="352" x2="1072" y2="345" stroke="#8a8a8a" stroke-width="1" />
<line x1="1062" y1="358" x2="1073" y2="374" stroke="#8a8a8a" stroke-width="1" />
<line x1="1057" y1="357" x2="1070" y2="354" stroke="#8a8a8a" stroke-width="0.8" />
<line x1="1056.9" y1="375.5" x2="1056.9" y2="386" stroke="#d42a10" stroke-width="1.8" />
<line x1="1056.9" y1="422.2" x2="1056.9" y2="429.6" stroke="#d42a10" stroke-width="1.8" />
<line x1="1056.9" y1="469" x2="1056.9" y2="477.7" stroke="#d42a10" stroke-width="1.8" />
<line x1="1056.9" y1="516" x2="1056.9" y2="524.6" stroke="#d42a10" stroke-width="1.8" />
<line x1="1056.7" y1="403.6" x2="1070" y2="403.6" stroke="#8a8a8a" stroke-width="1.1" />
<line x1="1056.7" y1="497" x2="1070" y2="497" stroke="#8a8a8a" stroke-width="1.1" />
<rect x="1062.5" y="410.3" width="16" height="79.7" fill="none" stroke="#86e060" stroke-width="1.1"/>
<line x1="1065.8" y1="412.5" x2="1065.8" y2="488.5" stroke="#86e060" stroke-width="2.2" />
<line x1="1073.6" y1="412.5" x2="1073.6" y2="438" stroke="#86e060" stroke-width="1.8" />
<line x1="1073.6" y1="461" x2="1073.6" y2="488.5" stroke="#86e060" stroke-width="1.8" />
<line x1="1065" y1="413.5" x2="1077" y2="413.5" stroke="#86e060" stroke-width="1.8" />
<line x1="1065" y1="424.6" x2="1077" y2="424.6" stroke="#86e060" stroke-width="1.8" />
<line x1="1065" y1="437" x2="1077" y2="437" stroke="#86e060" stroke-width="1.8" />
<line x1="1065" y1="461.7" x2="1077" y2="461.7" stroke="#86e060" stroke-width="1.8" />
<line x1="1065" y1="474" x2="1077" y2="474" stroke="#86e060" stroke-width="1.8" />
<line x1="1065" y1="487.6" x2="1077" y2="487.6" stroke="#86e060" stroke-width="1.8" />
<polyline points="1072.3,429.6 1056.8,449.8 1072.3,469" stroke="#858585" stroke-width="1.1" fill="none" />
<line x1="1056.8" y1="449.8" x2="1070" y2="449.8" stroke="#858585" stroke-width="1.1" />
<line x1="1058.7" y1="540.7" x2="1072.3" y2="524.6" stroke="#8a8a8a" stroke-width="1.1" />
<polyline points="893.4,410.2 862.7,410.2 862.7,542" stroke="#84d662" stroke-width="1.2" fill="none" />
<polyline points="893.4,410.2 893.4,514.3" stroke="#84d662" stroke-width="1.2" fill="none" />
<polyline points="862.7,514.3 924,514.3 924,542" stroke="#84d662" stroke-width="1.2" fill="none" />
<line x1="878" y1="514.3" x2="878" y2="542" stroke="#84d662" stroke-width="1.2" />
<rect x="864.2" y="516.3" width="13.3" height="18.5" fill="none" stroke="#84d662" stroke-width="1.2"/>
<line x1="864.2" y1="516.3" x2="877.5" y2="534.8" stroke="#84d662" stroke-width="1" />
<line x1="877.5" y1="516.3" x2="864.2" y2="534.8" stroke="#84d662" stroke-width="1" />
<line x1="862.7" y1="536.5" x2="878" y2="536.5" stroke="#84d662" stroke-width="1.8" />
<polyline points="893.4,435.4 901.6,435.4 904,438.7 919.5,440 933,443 945.8,446.8 953,453.8 955.4,461.7 953,469.3 945.8,476 933,479.6 919.5,482.5 904,484.2 901.6,488.5 893.4,488.5" stroke="#72b458" stroke-width="1.1" fill="none" />
<polyline points="904,477.5 904,445.4 919.5,443 932,445.5 944,449.5 950.5,455 952.8,461.7 950.5,468 944,473.5 932,477.5 919.5,479.8 904,477.5" stroke="#72b458" stroke-width="1.1" fill="none" />
<circle cx="880.9" cy="462.2" r="4.7" fill="none" stroke="#a66ae6" stroke-width="1.8"/>
<line x1="301.7" y1="187.7" x2="389.3" y2="187.7" stroke="#ececec" stroke-width="1.1" />
<line x1="345.8" y1="144.7" x2="345.8" y2="231.7" stroke="#ececec" stroke-width="1.1" />
<line x1="170.7" y1="482" x2="170.7" y2="527.4" stroke="#e6e6e6" stroke-width="1.1" />
<line x1="170.7" y1="527.4" x2="216" y2="527.4" stroke="#e6e6e6" stroke-width="1.1" />
<rect x="166.5" y="522.8" width="8.6" height="8.6" fill="none" stroke="#e6e6e6" stroke-width="1.2"/>
<polyline points="171.7,467 177.5,472.7 183.3,467" stroke="#e6e6e6" stroke-width="1.1" fill="none" />
<line x1="177.5" y1="472.7" x2="177.5" y2="478.7" stroke="#e6e6e6" stroke-width="1.1" />
<line x1="219" y1="514.3" x2="230.7" y2="526" stroke="#e6e6e6" stroke-width="1.1" />
<line x1="230.7" y1="514.3" x2="219" y2="526" stroke="#e6e6e6" stroke-width="1.1" />
</svg>
</div>

<div id="tabs" class="abs"></div>
<svg class="abs" style="left:157px;top:43px" width="918" height="498" viewBox="157 43 918 498" font-family="Liberation Sans, Noto Sans CJK SC, sans-serif">
<text x="160" y="59.8" font-size="11" font-weight="bold" fill="#dadada" textLength="92" lengthAdjust="spacingAndGlyphs">[−][俯视][二维线框]</text>
<circle cx="1016.8" cy="100.5" r="38.3" fill="none" stroke="#5c5c5c" stroke-width="9"/>
<rect x="999" y="83" width="36" height="36" fill="#8c8c8c"/>
<text x="1017" y="106.5" font-size="15" fill="#5a5a5a" text-anchor="middle" font-family="Liberation Serif, Noto Serif CJK SC, serif">上</text>
<text x="1017" y="66.8" font-family="Liberation Serif, Noto Serif CJK SC, serif" font-size="13" fill="#a0a0a0" text-anchor="middle" font-weight="600">北</text>
<text x="1017" y="145.8" font-family="Liberation Serif, Noto Serif CJK SC, serif" font-size="13" fill="#a0a0a0" text-anchor="middle" font-weight="600">南</text>
<text x="978" y="106" font-family="Liberation Serif, Noto Serif CJK SC, serif" font-size="13" fill="#a0a0a0" text-anchor="middle" font-weight="600">西</text>
<text x="1056.5" y="106" font-family="Liberation Serif, Noto Serif CJK SC, serif" font-size="13" fill="#a0a0a0" text-anchor="middle" font-weight="600">东</text>
<rect x="994" y="163.5" width="43.5" height="14" rx="3" fill="#7e7e8a" stroke="#8a8a96" stroke-width="1"/>
<text x="998.5" y="174.6" font-size="10.5" fill="#5a5a64" textLength="21" lengthAdjust="spacingAndGlyphs">WCS</text>
<path d="M1025.5,168 h7 l-3.5,4.5 z" fill="none" stroke="#a2a2ae" stroke-width="1"/>
</svg>
<div id="cmdleft" class="abs"></div>
<div id="cmdhist" class="abs"></div>
<div id="cmdline" class="abs"></div>
<svg class="abs" style="left:157px;top:541px" width="919" height="16" viewBox="157 541 919 16" font-family="Liberation Sans, Noto Sans CJK SC, sans-serif">
<rect x="158.5" y="542.5" width="12" height="12" fill="#fafafa" stroke="#d0d0d0" stroke-width="1"/>
<rect x="170.5" y="542.5" width="12" height="12" fill="#fafafa" stroke="#d0d0d0" stroke-width="1"/>
<rect x="182.5" y="542.5" width="12" height="12" fill="#fafafa" stroke="#d0d0d0" stroke-width="1"/>
<rect x="194.5" y="542.5" width="12" height="12" fill="#fafafa" stroke="#d0d0d0" stroke-width="1"/>
<path d="M161.5,545 v7" stroke="#555" stroke-width="1.3"/><path d="M167.5,545 v7 l-4.5,-3.5 z" fill="#555"/>
<path d="M179.5,545 v7 l-4.5,-3.5 z" fill="#555"/>
<path d="M185.5,545 v7 l4.5,-3.5 z" fill="#555"/>
<path d="M197,545 v7 l4.5,-3.5 z" fill="#555"/><path d="M203,545 v7" stroke="#555" stroke-width="1.3"/>
<path d="M206.5,541 L248.5,541 L243.3,553.6 L212,553.6 Z" fill="#212830"/>
<text x="227.3" y="552.2" font-size="11" fill="#f4f4f4" text-anchor="middle" textLength="21.5" lengthAdjust="spacingAndGlyphs">模型</text>
<path d="M249,542 L246,549 L248,554.3 L294.2,554.3 L302.5,541.7" fill="none" stroke="#555" stroke-width="1"/>
<text x="252.5" y="552" font-size="11" font-family="Liberation Serif, serif" fill="#333" textLength="36" lengthAdjust="spacingAndGlyphs">Layout1</text>
</svg>
<div class="abs" style="left:150px;top:556.5px;width:927px;height:4px;background:#696969;"></div>
<svg class="abs" style="left:155.5px;top:560px" width="19.5" height="47" viewBox="0 0 19.5 47">
<rect x="0.5" y="1" width="18" height="9" fill="#858585"/>
<rect x="1.5" y="3.2" width="1.3" height="1.3" fill="#b8b8b8"/><rect x="1.5" y="6" width="1.3" height="1.3" fill="#b8b8b8"/>
<rect x="4.3" y="3.2" width="1.3" height="1.3" fill="#b8b8b8"/><rect x="4.3" y="6" width="1.3" height="1.3" fill="#b8b8b8"/>
<rect x="7.1" y="3.2" width="1.3" height="1.3" fill="#b8b8b8"/><rect x="7.1" y="6" width="1.3" height="1.3" fill="#b8b8b8"/>
<rect x="9.899999999999999" y="3.2" width="1.3" height="1.3" fill="#b8b8b8"/><rect x="9.899999999999999" y="6" width="1.3" height="1.3" fill="#b8b8b8"/>
<rect x="12.7" y="3.2" width="1.3" height="1.3" fill="#b8b8b8"/><rect x="12.7" y="6" width="1.3" height="1.3" fill="#b8b8b8"/>
<rect x="15.5" y="3.2" width="1.3" height="1.3" fill="#b8b8b8"/><rect x="15.5" y="6" width="1.3" height="1.3" fill="#b8b8b8"/>
<path d="M6,16.5 l7,7 m0,-7 l-7,7" stroke="#f6f6f6" stroke-width="2.1" fill="none"/>
<rect x="0" y="28.2" width="19.5" height="19" fill="#4d4d4d"/>
<g transform="translate(9.5,39.5) rotate(-45)" fill="#f4f4f4"><rect x="-1.4" y="-2" width="2.8" height="9" rx="1"/><path d="M-3.6,-3.5 a3.7,3.7 0 0 0 7.2,0 v-3 h-2.2 v3 h-2.8 v-3 h-2.2 z"/></g>
</svg>
<div class="abs cmdtxt" style="left:177px;top:563.2px;">命令<span style="font-family:'Liberation Mono',monospace;font-size:10.6px;letter-spacing:-0.48px;">: *</span>取消<span style="font-family:'Liberation Mono',monospace;font-size:10.6px;letter-spacing:-0.48px;">*</span></div>
<div class="abs cmdtxt" style="left:177px;top:577.6px;">命令<span style="font-family:'Liberation Mono',monospace;font-size:10.6px;letter-spacing:-0.48px;">: *</span>取消<span style="font-family:'Liberation Mono',monospace;font-size:10.6px;letter-spacing:-0.48px;">*</span></div>
<svg class="abs" style="left:178px;top:592px" width="26" height="15" viewBox="0 0 26 15"><rect x="1.5" y="2.5" width="13" height="12" fill="#e4e4e4" stroke="#999" stroke-width="1"/><path d="M4,6 l3,2.8 l-3,2.8 M8.5,12.5 h4" stroke="#555" stroke-width="1.1" fill="none"/><path d="M18,8 h5 l-2.5,3 z" fill="#777"/></svg>
<div class="abs cmdtxt" style="left:204px;top:596px;">【当前为：普通电梯<span style="font-family:'Liberation Mono',monospace;font-size:10.6px;letter-spacing:-0.48px;">&lt;H&gt;</span>】点取四个电梯井角点<span style="font-family:'Liberation Mono',monospace;font-size:10.6px;letter-spacing:-0.48px;">&lt;</span>空格或回车<span style="font-family:'Liberation Mono',monospace;font-size:10.6px;letter-spacing:-0.48px;">&gt;/</span>两点框选电梯井口<span style="font-family:'Liberation Mono',monospace;font-size:10.6px;letter-spacing:-0.48px;">&lt;</span>默认<span style="font-family:'Liberation Mono',monospace;font-size:10.6px;letter-spacing:-0.48px;">&gt;:</span></div>

<div class="abs" style="left:2px;top:43px;width:129px;height:22px;background:#ababab;border-radius:4px 4px 0 0;"></div>
<div class="abs" style="left:12.5px;top:46px;font-size:10.9px;line-height:16px;color:#444;white-space:nowrap;">红苹果装饰系...</div>
<svg class="abs" style="left:4px;top:45px" width="5" height="14"><rect x="0.5" y="1.0" width="1.1" height="1.1" fill="#666"/><rect x="2.7" y="1.0" width="1.1" height="1.1" fill="#ddd"/><rect x="0.5" y="3.4" width="1.1" height="1.1" fill="#666"/><rect x="2.7" y="3.4" width="1.1" height="1.1" fill="#ddd"/><rect x="0.5" y="5.8" width="1.1" height="1.1" fill="#666"/><rect x="2.7" y="5.8" width="1.1" height="1.1" fill="#ddd"/><rect x="0.5" y="8.2" width="1.1" height="1.1" fill="#666"/><rect x="2.7" y="8.2" width="1.1" height="1.1" fill="#ddd"/><rect x="0.5" y="10.6" width="1.1" height="1.1" fill="#666"/><rect x="2.7" y="10.6" width="1.1" height="1.1" fill="#ddd"/></svg>
<div class="abs" style="left:3px;top:63px;width:127px;height:470px;background:#fafafa;border:1px solid #d8d8d8;border-right:1px solid #aaa;box-sizing:border-box;border-radius:2px 0 0 0"></div>
<div class="abs" style="left:3px;top:533px;width:127px;height:74px;background:#f2f2f2;"></div>

<div class="abs" style="left:131px;top:66px;width:18px;height:104px;background:linear-gradient(90deg,#d4d4d4,#cccccc 30%,#c8c8c8);border-radius:0 3px 3px 0;box-sizing:border-box;border-top:1px solid #e8e8e8;border-bottom:1px solid #9a9a9a;border-right:1px solid #b0b0b0;"></div>
<div class="abs" style="left:99.5px;top:110.0px;width:80px;height:16px;line-height:16px;text-align:center;font-size:11.3px;color:#333;transform:rotate(-90deg);white-space:nowrap;">平面门窗</div>
<div class="abs" style="left:131px;top:170px;width:18px;height:104.5px;background:linear-gradient(90deg,#d4d4d4,#cccccc 30%,#c8c8c8);border-radius:0 3px 3px 0;box-sizing:border-box;border-top:1px solid #e8e8e8;border-bottom:1px solid #9a9a9a;border-right:1px solid #b0b0b0;"></div>
<div class="abs" style="left:99.5px;top:214.25px;width:80px;height:16px;line-height:16px;text-align:center;font-size:11.3px;color:#333;transform:rotate(-90deg);white-space:nowrap;">标注相关</div>
<div class="abs" style="left:129px;top:274.5px;width:20px;height:105.0px;background:#fbfbfb;border-radius:0 3px 3px 0;box-sizing:border-box;border-top:1px solid #e8e8e8;border-bottom:1px solid #9a9a9a;border-right:1px solid #b0b0b0;"></div>
<div class="abs" style="left:99.5px;top:319.0px;width:80px;height:16px;line-height:16px;text-align:center;font-size:11.3px;color:#333;transform:rotate(-90deg);white-space:nowrap;">图形绘制</div>
<div class="abs" style="left:131px;top:379.5px;width:18px;height:105.5px;background:linear-gradient(90deg,#d4d4d4,#cccccc 30%,#c8c8c8);border-radius:0 3px 3px 0;box-sizing:border-box;border-top:1px solid #e8e8e8;border-bottom:1px solid #9a9a9a;border-right:1px solid #b0b0b0;"></div>
<div class="abs" style="left:99.5px;top:424.25px;width:80px;height:16px;line-height:16px;text-align:center;font-size:11.3px;color:#333;transform:rotate(-90deg);white-space:nowrap;">工具类</div>
<div class="abs" style="left:131px;top:485px;width:18px;height:106px;background:linear-gradient(90deg,#d4d4d4,#cccccc 30%,#c8c8c8);border-radius:0 3px 3px 0;box-sizing:border-box;border-top:1px solid #e8e8e8;border-bottom:1px solid #9a9a9a;border-right:1px solid #b0b0b0;"></div>
<div class="abs" style="left:99.5px;top:530.0px;width:80px;height:16px;line-height:16px;text-align:center;font-size:11.3px;color:#333;transform:rotate(-90deg);white-space:nowrap;">预算系统</div>
<div class="abs" style="left:40.8px;top:67.5px;font-size:10.9px;line-height:16px;color:#3a3a3a;white-space:nowrap;">苹果图库</div>
<div class="abs" style="left:50.5px;top:85.55px;font-size:10.9px;line-height:16px;color:#3a3a3a;white-space:nowrap;">图库系统</div>
<div class="abs" style="left:50.5px;top:103.6px;font-size:10.9px;line-height:16px;color:#3a3a3a;white-space:nowrap;">格式化目录</div>
<div class="abs" style="left:40.8px;top:121.65px;font-size:10.9px;line-height:16px;color:#3a3a3a;white-space:nowrap;">图形绘制(平面)</div>
<div class="abs" style="left:50.5px;top:139.70000000000002px;font-size:10.9px;line-height:16px;color:#3a3a3a;white-space:nowrap;">窗帘绘制</div>
<div class="abs" style="left:50.5px;top:157.75000000000003px;font-size:10.9px;line-height:16px;color:#3a3a3a;white-space:nowrap;">柱子插入</div>
<div class="abs" style="left:50.5px;top:175.80000000000004px;font-size:10.9px;line-height:16px;color:#3a3a3a;white-space:nowrap;">衣柜</div>
<div class="abs" style="left:50.5px;top:193.85000000000005px;font-size:10.9px;line-height:16px;color:#3a3a3a;white-space:nowrap;">简易柜</div>
<div class="abs" style="left:50.5px;top:211.90000000000006px;font-size:10.9px;line-height:16px;color:#3a3a3a;white-space:nowrap;">异形柜</div>
<div class="abs" style="left:40.8px;top:229.95000000000007px;font-size:10.9px;line-height:16px;color:#3a3a3a;white-space:nowrap;">墙体绘制(平面)</div>
<div class="abs" style="left:50.5px;top:248.00000000000006px;font-size:10.9px;line-height:16px;color:#3a3a3a;white-space:nowrap;">轴网生墙</div>
<div class="abs" style="left:50.5px;top:266.05000000000007px;font-size:10.9px;line-height:16px;color:#3a3a3a;white-space:nowrap;">画双线墙</div>
<div class="abs" style="left:50.5px;top:284.1000000000001px;font-size:10.9px;line-height:16px;color:#3a3a3a;white-space:nowrap;">画单线墙</div>
<div class="abs" style="left:50.5px;top:302.1500000000001px;font-size:10.9px;line-height:16px;color:#3a3a3a;white-space:nowrap;">单线生墙</div>
<div class="abs" style="left:50.5px;top:320.2000000000001px;font-size:10.9px;line-height:16px;color:#3a3a3a;white-space:nowrap;">墙体完成面</div>
<div class="abs" style="left:40.8px;top:338.2500000000001px;font-size:10.9px;line-height:16px;color:#3a3a3a;white-space:nowrap;">楼梯其它(平面)</div>
<div class="abs" style="left:50.5px;top:356.3000000000001px;font-size:10.9px;line-height:16px;color:#3a3a3a;white-space:nowrap;">电梯井</div>
<div class="abs" style="left:50.5px;top:374.35000000000014px;font-size:10.9px;line-height:16px;color:#3a3a3a;white-space:nowrap;">电梯门</div>
<svg class="abs" style="left:0;top:60px" width="131" height="340" viewBox="0 60 131 340" fill="none">
<path d="M15.5,82 V346" stroke="#b9a9b9" stroke-width="1" stroke-dasharray="1 1.6"/>
<path d="M25.5,84 V113" stroke="#aaa" stroke-width="1" stroke-dasharray="1 1.6"/>
<path d="M25.5,138 V221" stroke="#aaa" stroke-width="1" stroke-dasharray="1 1.6"/>
<path d="M25.5,246 V329" stroke="#aaa" stroke-width="1" stroke-dasharray="1 1.6"/>
<path d="M25.5,354 V383" stroke="#aaa" stroke-width="1" stroke-dasharray="1 1.6"/>
<rect x="11.5" y="72" width="7.5" height="7.5" fill="#fdfdfd" stroke="#a89ab0" stroke-width="1"/><path d="M13.3,75.8 h4" stroke="#777" stroke-width="1"/>
<g transform="translate(21.5,69)"><path d="M1,12 v-9.5 h4 l1.3,1.5 h5.7 v2.2" fill="#efefef" stroke="#777" stroke-width="1"/><path d="M1,12 l3.2,-5.6 h10.3 l-3.5,5.6 z" fill="#b5b5b5" stroke="#6a6a6a" stroke-width="1"/></g>
<g transform="translate(31,87.05)"><rect x="0.5" y="0.5" width="13" height="13" fill="#f0f0f0" stroke="#777"/><rect x="1" y="1" width="12" height="2.5" fill="#8a8a8a"/><rect x="2.5" y="5" width="3" height="2.5" fill="#4a7ad0"/><rect x="2.5" y="9" width="3" height="2.5" fill="#e08a20"/><path d="M7,6 h5 M7,8 h5 M7,10.5 h5" stroke="#aaa"/></g>
<g transform="translate(31,105.1)"><path d="M1.5,0.5 h10 v10 l-3,3 h-7 z" fill="#555" stroke="#444"/><rect x="4" y="2.5" width="6" height="5" fill="#f0c020"/><path d="M3,11 l4,-3 l3,1.5" stroke="#eee" stroke-width="1.3"/></g>
<rect x="11.5" y="126.15" width="7.5" height="7.5" fill="#fdfdfd" stroke="#a89ab0" stroke-width="1"/><path d="M13.3,129.95000000000002 h4" stroke="#777" stroke-width="1"/>
<g transform="translate(21.5,123.15)"><path d="M1,12 v-9.5 h4 l1.3,1.5 h5.7 v2.2" fill="#efefef" stroke="#777" stroke-width="1"/><path d="M1,12 l3.2,-5.6 h10.3 l-3.5,5.6 z" fill="#b5b5b5" stroke="#6a6a6a" stroke-width="1"/></g>
<g transform="translate(31,141.20000000000002)"><path d="M1,13 L12.5,0.5" stroke="#e8202a" stroke-width="1.4"/></g>
<g transform="translate(31,159.25000000000003)"><rect x="0" y="0" width="14" height="14" fill="#d8d8d8"/><path d="M7,0 V14 M0,7 H14" stroke="#f08a60" stroke-width="1.2"/><rect x="4" y="4" width="6" height="6" fill="#333"/></g>
<g transform="translate(31,177.30000000000004)"><rect x="1" y="3" width="13" height="6.5" fill="#5a8a98"/><path d="M1,5.2 h13 M1,7.4 h13 M4,3 v6.5 M7.5,3 v6.5 M11,3 v6.5" stroke="#e8f0f0" stroke-width="0.9"/><path d="M1,11.5 h13" stroke="#bbb" stroke-dasharray="1.5 1.5"/></g>
<g transform="translate(31,195.35000000000005)"><rect x="1" y="3.5" width="13" height="6.5" fill="#dfeaea" stroke="#4a7a88" stroke-width="1.4"/><path d="M3.5,5 l3,3.5 m0,-3.5 l-3,3.5 M8.5,5 l3,3.5 m0,-3.5 l-3,3.5" stroke="#4a7a88" stroke-width="0.9"/><path d="M1,12 h13" stroke="#bbb" stroke-dasharray="1.5 1.5"/><path d="M1,1.5 h6" stroke="#ccc" stroke-dasharray="1.5 1.5"/></g>
<g transform="translate(31,213.40000000000006)"><path d="M1.5,12 q0.5,-8.5 6,-8.5 q5.5,0 6,8.5 h-3.2 q-0.3,-4 -2.8,-4 q-2.5,0 -2.8,4 z" fill="#3f7486" stroke="#3f7486"/><path d="M3,6 l2,2 M7.5,3.5 v3 M12,6 l-2,2" stroke="#dfeaea" stroke-width="0.9"/><path d="M1,1.5 h6" stroke="#ccc" stroke-dasharray="1.5 1.5"/></g>
<rect x="11.5" y="234.45000000000007" width="7.5" height="7.5" fill="#fdfdfd" stroke="#a89ab0" stroke-width="1"/><path d="M13.3,238.25000000000009 h4" stroke="#777" stroke-width="1"/>
<g transform="translate(21.5,231.45000000000007)"><path d="M1,12 v-9.5 h4 l1.3,1.5 h5.7 v2.2" fill="#efefef" stroke="#777" stroke-width="1"/><path d="M1,12 l3.2,-5.6 h10.3 l-3.5,5.6 z" fill="#b5b5b5" stroke="#6a6a6a" stroke-width="1"/></g>
<g transform="translate(31,249.50000000000006)"><path d="M3,1 V13 M11,1 V13 M1,3.5 H13.5 M1,11 H13.5" stroke="#7a30d0" stroke-width="1.3"/><path d="M3,3.5 h8 v7.5 h-8 z" stroke="#e03a3a" stroke-width="1.2"/></g>
<g transform="translate(31,267.55000000000007)"><rect x="0" y="0" width="14" height="14" fill="#d4d4d4"/><path d="M0,14 L14,0" stroke="#fff" stroke-width="4.5"/><path d="M2.5,11.5 L11.5,2.5" stroke="#666" stroke-width="0.9"/><rect x="1.5" y="10.5" width="2" height="2" fill="#a02020"/><rect x="10.5" y="1.5" width="2" height="2" fill="#a02020"/></g>
<g transform="translate(31,285.6000000000001)"><path d="M1.5,12.5 v-11 h5 v4.5 h6.5 v6.5 z" fill="#fff" stroke="#5a7ae8" stroke-width="1.3"/></g>
<g transform="translate(31,303.6500000000001)"><path d="M7,0.5 V13.5" stroke="#e03a3a" stroke-width="1.6"/><path d="M0.5,7 H13.5" stroke="#5a5ad8" stroke-width="2.2"/><path d="M2,7 H12" stroke="#e06a6a" stroke-width="0.8"/></g>
<g transform="translate(31,321.7000000000001)"><path d="M2.5,1.5 V12 H13" stroke="#5a5a5a" stroke-width="1.5"/><path d="M4.5,1.5 V10 H13" stroke="#e08a80" stroke-width="1.1" stroke-dasharray="1.5 1"/><path d="M6,7 L12,1.5 M9,1.5 h3.5 v3" stroke="#ccc" stroke-dasharray="1.5 1.2"/></g>
<rect x="11.5" y="342.7500000000001" width="7.5" height="7.5" fill="#fdfdfd" stroke="#a89ab0" stroke-width="1"/><path d="M13.3,346.5500000000001 h4" stroke="#777" stroke-width="1"/>
<g transform="translate(21.5,339.7500000000001)"><path d="M1,12 v-9.5 h4 l1.3,1.5 h5.7 v2.2" fill="#efefef" stroke="#777" stroke-width="1"/><path d="M1,12 l3.2,-5.6 h10.3 l-3.5,5.6 z" fill="#b5b5b5" stroke="#6a6a6a" stroke-width="1"/></g>
<g transform="translate(31,357.8000000000001)"><rect x="1.5" y="1.5" width="11" height="11.5" rx="1.5" fill="#f4f4f4" stroke="#4a5a5a" stroke-width="1.3"/><path d="M3,3 L11,11.5 M11,3 L3,11.5" stroke="#6a8a8a" stroke-width="0.9"/><path d="M3.5,3.5 h7 v7.5 h-7 z" stroke="#9ab" stroke-width="0.7"/></g>
<g transform="translate(31,375.85000000000014)"><path d="M0.5,8 h3 v2.5 h7 v-2.5 h3.5" stroke="#5a5a5a" stroke-width="1.3"/><path d="M3,11 h8.5" stroke="#3f8a98" stroke-width="2"/><path d="M0.5,6 h13.5" stroke="#ccc" stroke-dasharray="1.5 1.2"/></g>
</svg>
<div class="abs" style="left:4.8px;top:538px;width:60px;height:19.5px;box-sizing:border-box;border:1px solid #a8a8a8;border-radius:3px;background:linear-gradient(#fbfbfb 0,#f2f2f2 50%,#d2d2d2 52%,#cfcfcf 100%);text-align:center;font-size:11.2px;line-height:18px;color:#444;white-space:nowrap;">画立面图</div>
<div class="abs" style="left:67.5px;top:538px;width:60px;height:19.5px;box-sizing:border-box;border:1px solid #a8a8a8;border-radius:3px;background:linear-gradient(#fbfbfb 0,#f2f2f2 50%,#d2d2d2 52%,#cfcfcf 100%);text-align:center;font-size:11.2px;line-height:18px;color:#444;white-space:nowrap;">苹果图层</div>
<div class="abs" style="left:4.8px;top:561.8px;width:60px;height:19.5px;box-sizing:border-box;border:1px solid #a8a8a8;border-radius:3px;background:linear-gradient(#fbfbfb 0,#f2f2f2 50%,#d2d2d2 52%,#cfcfcf 100%);text-align:center;font-size:11.2px;line-height:18px;color:#444;white-space:nowrap;">备用</div>
<div class="abs" style="left:67.5px;top:561.8px;width:60px;height:19.5px;box-sizing:border-box;border:1px solid #a8a8a8;border-radius:3px;background:linear-gradient(#fbfbfb 0,#f2f2f2 50%,#d2d2d2 52%,#cfcfcf 100%);text-align:center;font-size:11.2px;line-height:18px;color:#444;white-space:nowrap;">备用</div>
<div class="abs" style="left:4.8px;top:585.2px;width:60px;height:19.5px;box-sizing:border-box;border:1px solid #a8a8a8;border-radius:3px;background:linear-gradient(#fbfbfb 0,#f2f2f2 50%,#d2d2d2 52%,#cfcfcf 100%);text-align:center;font-size:11.2px;line-height:18px;color:#444;white-space:nowrap;">备用</div>
<div class="abs" style="left:67.5px;top:585.2px;width:60px;height:19.5px;box-sizing:border-box;border:1px solid #a8a8a8;border-radius:3px;background:linear-gradient(#fbfbfb 0,#f2f2f2 50%,#d2d2d2 52%,#cfcfcf 100%);text-align:center;font-size:11.2px;line-height:18px;color:#444;white-space:nowrap;">备用</div>
<div class="abs" style="left:2.3px;top:605.3px;width:128px;height:2px;background:#a2a2a2;"></div>
</body>
</html>
